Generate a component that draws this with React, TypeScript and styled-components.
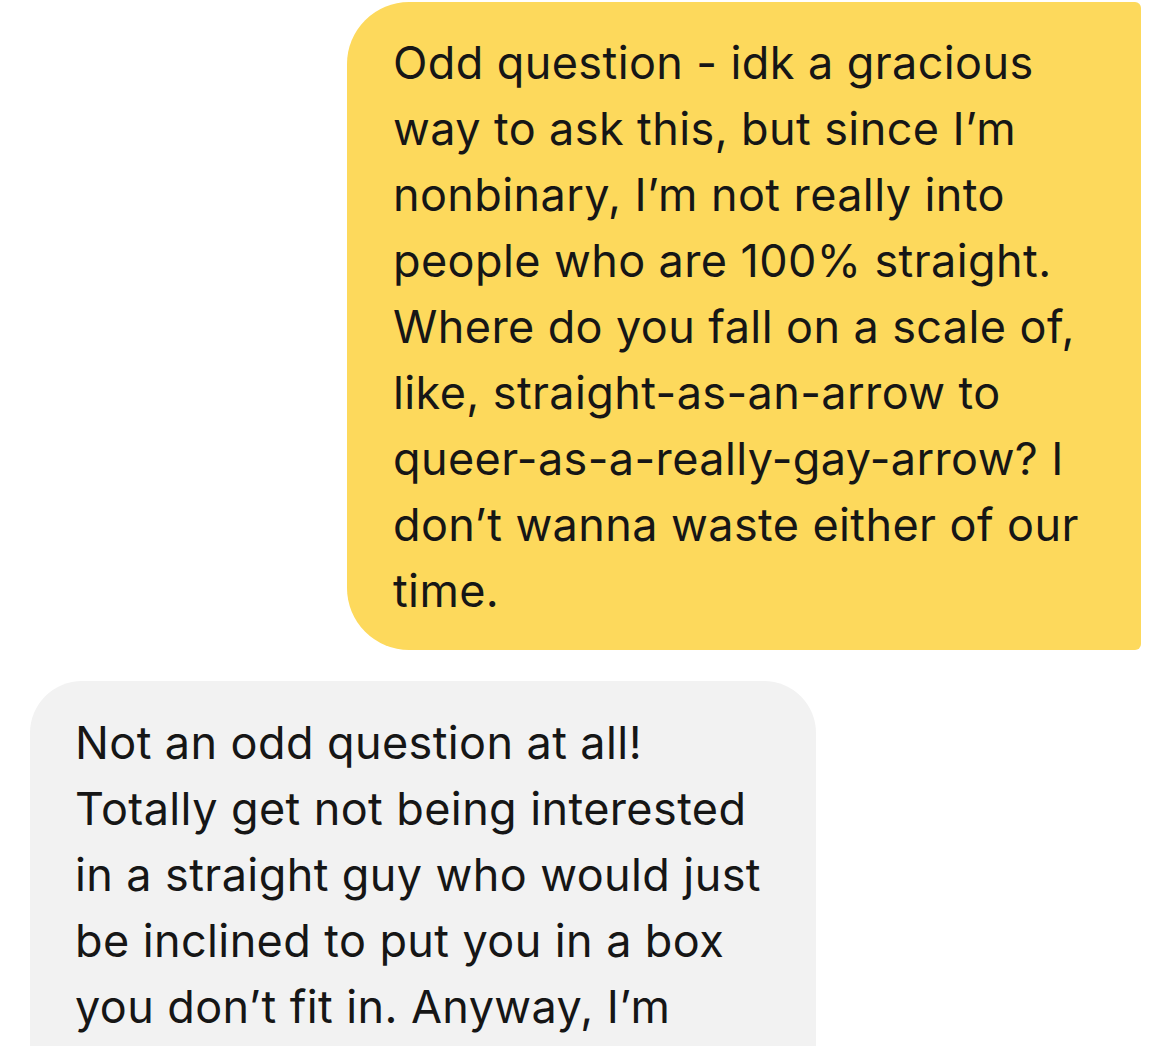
import React, { FC } from "react";
import styled, { createGlobalStyle } from "styled-components";

const sent = [
    "Odd question - idk a gracious",
    "way to ask this, but since I’m",
    "nonbinary, I’m not really into",
    "people who are 100% straight.",
    "Where do you fall on a scale of,",
    "like, straight-as-an-arrow to",
    "queer-as-a-really-gay-arrow? I",
    "don’t wanna waste either of our",
    "time.",
];

const received = [
    "Not an odd question at all!",
    "Totally get not being interested",
    "in a straight guy who would just",
    "be inclined to put you in a box",
    "you don’t fit in. Anyway, I’m",
];

const App: FC = () => {
    return (
        <Thread>
            <GlobalStyle />
            <Row $mine>
                <Bubble $mine>
                    {sent.map((l, i) => <Line key={i}>{l}</Line>)}
                </Bubble>
            </Row>
            <Row>
                <Bubble $open>
                    {received.map((l, i) => <Line key={i}>{l}</Line>)}
                </Bubble>
            </Row>
        </Thread>
    );
};

const GlobalStyle = createGlobalStyle`
    html, body {
        margin: 0;
        padding: 0;
        background: #ffffff;
        overflow: hidden;
    }
    body {
        font-family: "Inter", "Liberation Sans", sans-serif;
        color: #161616;
    }
`;

const Thread = styled.div`
    width: 1170px;
    height: 1046px;
    display: flex;
    flex-direction: column;
    gap: 31px;
    padding-top: 2px;
    box-sizing: border-box;
    overflow: hidden;
`;

const Row = styled.div<{ $mine?: boolean }>`
    display: flex;
    justify-content: ${(p) => (p.$mine ? "flex-end" : "flex-start")};
    padding: ${(p) => (p.$mine ? "0 29px 0 0" : "0 0 0 30px")};
`;

// the received bubble runs on past the bottom of the screen
const Bubble = styled.div<{ $mine?: boolean; $open?: boolean }>`
    width: ${(p) => (p.$mine ? "794px" : "786px")};
    box-sizing: border-box;
    background: ${(p) => (p.$mine ? "#fdd95c" : "#f2f2f2")};
    border-radius: ${(p) => (p.$mine ? "62px 6px 6px 62px" : "52px 52px 0 0")};
    padding: ${(p) => (p.$mine ? "28px 10px 26px 46px" : "29px 10px 80px 45px")};
`;

const Line = styled.div`
    font-size: 45px;
    line-height: 66px;
    white-space: nowrap;
    letter-spacing: 0.4px;
`;

export default App;
